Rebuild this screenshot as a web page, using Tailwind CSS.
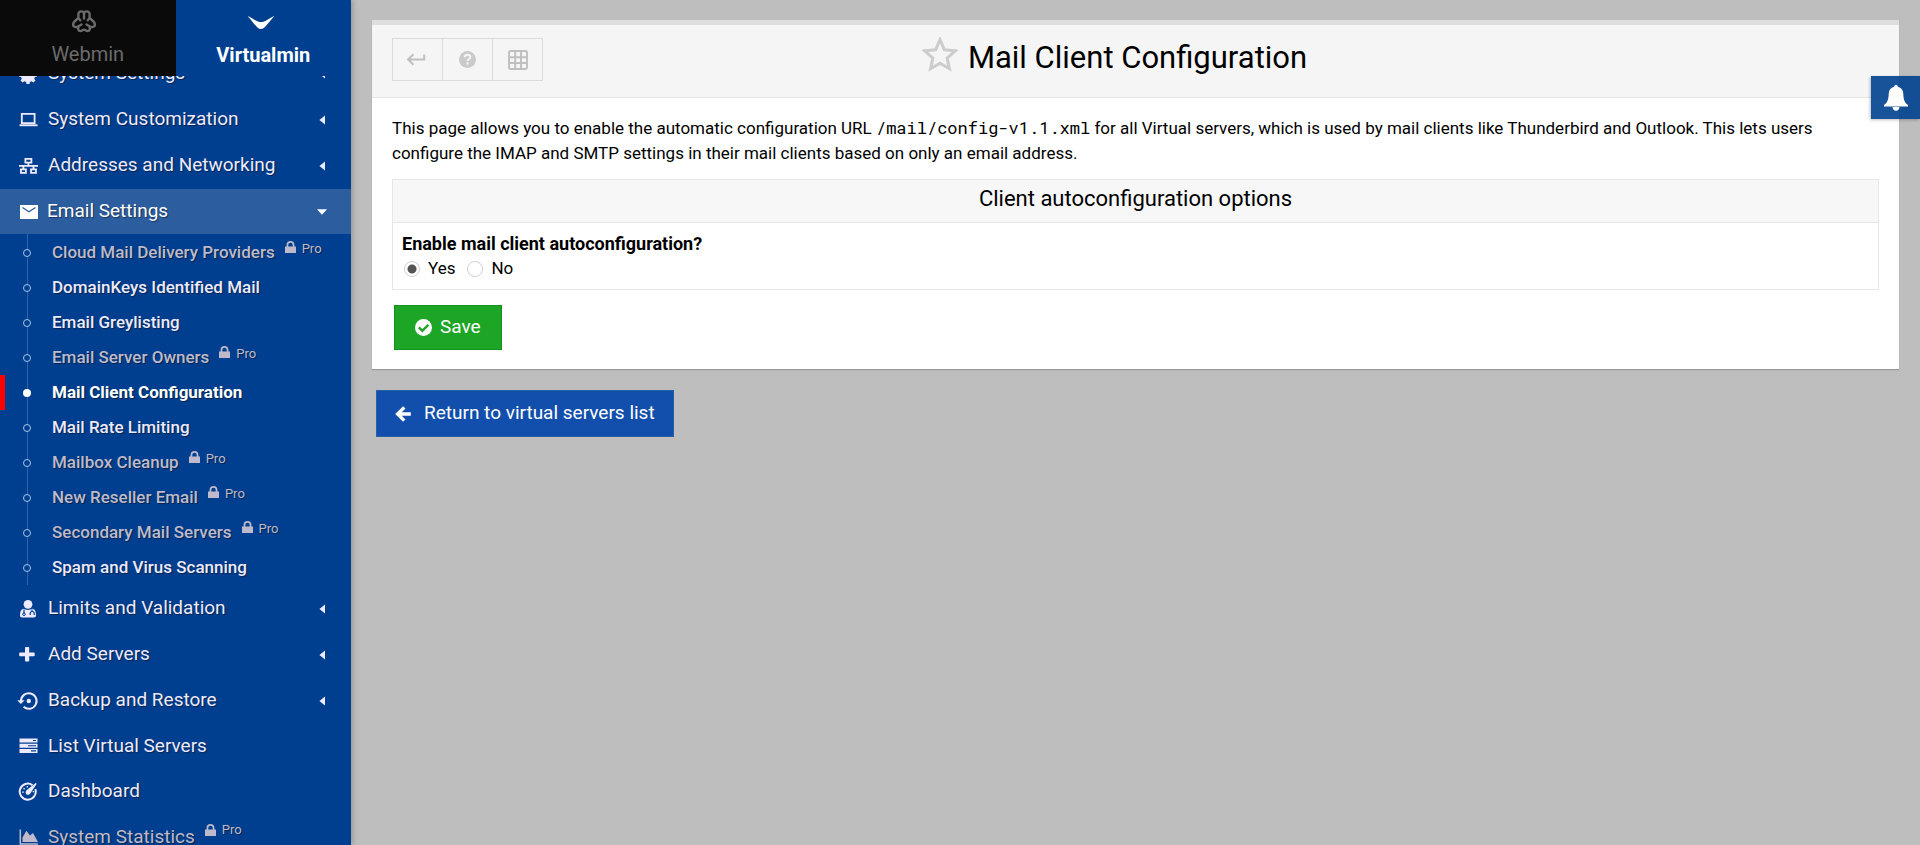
<!DOCTYPE html>
<html lang="en">
<head>
<meta charset="utf-8">
<meta name="viewport" content="width=device-width, initial-scale=1">
<title>Mail Client Configuration</title>
<script src="https://cdn.jsdelivr.net/npm/@tailwindcss/browser@4"></script>
</head>
<body class="flex h-screen overflow-hidden bg-[#bebebe] font-['Roboto',sans-serif] text-[17px] text-black">

<svg class="hidden">
  <symbol id="caret-left" viewBox="0 0 6 10"><path d="M6 0.5v9L0.4 5z" fill="currentColor"/></symbol>
  <symbol id="caret-down" viewBox="0 0 10 6"><path d="M0 0.3h10L5 5.8z" fill="currentColor"/></symbol>
  <symbol id="lock" viewBox="0 0 11 12"><path d="M0 5.4h1.6V3.9a3.9 3.9 0 0 1 7.8 0v1.5H11V12H0zM3.3 5.4h4.4V3.9a2.2 2.2 0 0 0-4.4 0z" fill="currentColor" fill-rule="evenodd"/></symbol>
</svg>

<aside class="relative z-10 flex w-[351px] shrink-0 flex-col overflow-hidden bg-[#003f8f] text-[#eeeaff] shadow-[2px_0_5px_rgba(0,0,0,0.2)]">
  <div class="absolute inset-x-0 top-0 z-10 flex h-[76px]">
    <button class="flex flex-1 flex-col items-center bg-[#0a0a0a] pt-[10px] text-xl text-[#6b6b6b]">
      <svg class="ml-[-7px] h-[23px] w-[24px]" viewBox="0 0 24 23" fill="none" stroke="currentColor" stroke-width="2.4" stroke-linejoin="round" stroke-linecap="round"><path d="M8.200 10.200L6.400 8V4a2.700 2.700 0 0 1 2.900-2.600c1.600 0 2.700 1.100 2.700 2.600 0-1.500 1.100-2.600 2.700-2.600A2.700 2.700 0 0 1 17.600 4v4l-1.800 2.200M12 4v4.500M6.400 8L3 11c-2.300 2-2.300 4.600-.9 5.600 1.300.9 2.900.6 4.400-.3l3-1.800M17.600 8L21 11c2.300 2 2.300 4.600.9 5.600-1.300.9-2.900.6-4.400-.3l-3-1.800M6.500 17c-1 1.700 0 4 1.900 4.100 1.500 0 2.400-1.500 3.600-1.500s2.100 1.500 3.600 1.500c1.900-.1 2.900-2.400 1.900-4.100"/></svg>
      <span class="mt-[6px] leading-[30px]">Webmin</span>
    </button>
    <button class="flex flex-1 flex-col items-center bg-[#003f8f] pt-[15px] text-xl font-bold text-white">
      <svg class="ml-[-5px] h-[14px] w-[28px]" viewBox="0 0 28 14" fill="currentColor"><path d="M.6.9C5.500 2.800 9.500 7 13.900 7S22.500 2.800 27.400.9C23 5.500 20 10.500 16.800 12.900c-1.900 1.300-3.900 1.300-5.800 0C8 10.500 5 5.500.6.9z"/></svg>
      <span class="mt-[11px] leading-[30px]">Virtualmin</span>
    </button>
  </div>

  <nav class="flex flex-col gap-px pt-[51px] text-[19px] [text-shadow:1px_1px_1px_rgba(0,0,0,0.45)]">
    <a href="#" class="flex h-[45px] shrink-0 items-center pl-[18px] pr-[26px]">
      <svg class="mr-2.5 size-5" viewBox="0 0 20 20"><path d="M8.500 2h3l.4 2.200 1.700.7 1.800-1.300 2.100 2.100-1.300 1.800.7 1.700 2.100.4v3l-2.100.4-.7 1.700 1.300 1.800-2.100 2.100-1.800-1.300-1.700.7-.4 2.100h-3l-.4-2.100-1.700-.7-1.800 1.300-2.100-2.100 1.300-1.800-.7-1.700L1 12.600v-3l2.100-.4.7-1.700-1.300-1.800 2.100-2.100 1.800 1.300 1.700-.7z" fill="currentColor"/></svg>
      System Settings
      <svg class="ml-auto h-[10px] w-[6px]"><use href="#caret-left"/></svg>
    </a>
    <a href="#" class="flex h-[45px] shrink-0 items-center pl-[18px] pr-[26px]">
      <svg class="mr-2.5 size-5" viewBox="0 0 20 20"><path d="M3.800 3.800h12.800v9.400H3.800z" fill="none" stroke="currentColor" stroke-width="1.800"/><path d="M1.500 14.300h18v1.900h-18z" fill="currentColor"/></svg>
      System Customization
      <svg class="ml-auto h-[10px] w-[6px]"><use href="#caret-left"/></svg>
    </a>
    <a href="#" class="flex h-[45px] shrink-0 items-center pl-[18px] pr-[26px]">
      <svg class="mr-2.5 size-5" viewBox="0 0 20 20" fill="none" stroke="currentColor" stroke-width="1.800"><path d="M7.400 2.900h6v3.700h-6zM2.900 13.300h5v3.500h-5zM13 13.300h5v3.500h-5z"/><path d="M1 9.900h19M10.400 7v3M5.400 10v3M15.500 10v3"/></svg>
      Addresses and Networking
      <svg class="ml-auto h-[10px] w-[6px]"><use href="#caret-left"/></svg>
    </a>
    <div>
      <a href="#" class="flex h-[45px] items-center bg-[#2c5d9f] pl-[18px] pr-[24px] text-white">
        <svg class="mr-[9px] size-5" viewBox="0 0 20 20"><path d="M2 3h18v14H2z" fill="currentColor"/><path d="M4.500 5.500L11 9.800l6.500-4.300" fill="none" stroke="#2c5d9f" stroke-width="1.300"/></svg>
        Email Settings
        <svg class="ml-auto h-[6px] w-[10px]"><use href="#caret-down"/></svg>
      </a>
      <ul class="relative pt-px text-[17px] font-medium before:absolute before:inset-y-0 before:left-[27px] before:w-px before:bg-[#3065ab]">
        <li><a href="#" class="flex h-[35px] items-center pl-[23px] text-[#bfbacb]"><i class="relative mr-[21px] size-2 rounded-full border border-[#a9c6e6] bg-[#003f8f]"></i>Cloud Mail Delivery Providers<span class="flex items-center gap-1.5 pb-2 pl-2.5 text-[13px] font-normal"><svg class="mb-1 h-[12px] w-[11px]"><use href="#lock"/></svg>Pro</span></a></li>
        <li><a href="#" class="flex h-[35px] items-center pl-[23px]"><i class="relative mr-[21px] size-2 rounded-full border border-[#a9c6e6] bg-[#003f8f]"></i>DomainKeys Identified Mail</a></li>
        <li><a href="#" class="flex h-[35px] items-center pl-[23px]"><i class="relative mr-[21px] size-2 rounded-full border border-[#a9c6e6] bg-[#003f8f]"></i>Email Greylisting</a></li>
        <li><a href="#" class="flex h-[35px] items-center pl-[23px] text-[#bfbacb]"><i class="relative mr-[21px] size-2 rounded-full border border-[#a9c6e6] bg-[#003f8f]"></i>Email Server Owners<span class="flex items-center gap-1.5 pb-2 pl-2.5 text-[13px] font-normal"><svg class="mb-1 h-[12px] w-[11px]"><use href="#lock"/></svg>Pro</span></a></li>
        <li><a href="#" aria-current="page" class="flex h-[35px] items-center border-l-[5px] border-[#ff0000] pl-[18px] font-bold text-white"><i class="relative mr-[21px] size-2 rounded-full bg-white"></i>Mail Client Configuration</a></li>
        <li><a href="#" class="flex h-[35px] items-center pl-[23px]"><i class="relative mr-[21px] size-2 rounded-full border border-[#a9c6e6] bg-[#003f8f]"></i>Mail Rate Limiting</a></li>
        <li><a href="#" class="flex h-[35px] items-center pl-[23px] text-[#bfbacb]"><i class="relative mr-[21px] size-2 rounded-full border border-[#a9c6e6] bg-[#003f8f]"></i>Mailbox Cleanup<span class="flex items-center gap-1.5 pb-2 pl-2.5 text-[13px] font-normal"><svg class="mb-1 h-[12px] w-[11px]"><use href="#lock"/></svg>Pro</span></a></li>
        <li><a href="#" class="flex h-[35px] items-center pl-[23px] text-[#bfbacb]"><i class="relative mr-[21px] size-2 rounded-full border border-[#a9c6e6] bg-[#003f8f]"></i>New Reseller Email<span class="flex items-center gap-1.5 pb-2 pl-2.5 text-[13px] font-normal"><svg class="mb-1 h-[12px] w-[11px]"><use href="#lock"/></svg>Pro</span></a></li>
        <li><a href="#" class="flex h-[35px] items-center pl-[23px] text-[#bfbacb]"><i class="relative mr-[21px] size-2 rounded-full border border-[#a9c6e6] bg-[#003f8f]"></i>Secondary Mail Servers<span class="flex items-center gap-1.5 pb-2 pl-2.5 text-[13px] font-normal"><svg class="mb-1 h-[12px] w-[11px]"><use href="#lock"/></svg>Pro</span></a></li>
        <li><a href="#" class="flex h-[35px] items-center pl-[23px]"><i class="relative mr-[21px] size-2 rounded-full border border-[#a9c6e6] bg-[#003f8f]"></i>Spam and Virus Scanning</a></li>
      </ul>
    </div>
    <a href="#" class="flex h-[45px] shrink-0 items-center pl-[18px] pr-[26px]">
      <svg class="mr-2.5 size-5" viewBox="0 0 20 20"><circle cx="10" cy="5.300" r="4.400" fill="currentColor"/><path d="M2 16.500c0-4 1-6.300 3.500-6.700C8 11.300 12 11.300 14.500 9.800c2.500.4 3.500 2.700 3.500 6.700 0 1.300-.8 2-2 2H4c-1.200 0-2-.7-2-2z" fill="currentColor"/><path d="M6 10.500v4M12.200 16v-1.500a2 2 0 0 1 4 0V16M14 10.500v2" stroke="#003f8f" stroke-width="1.200" fill="none"/><circle cx="6" cy="15.200" r="1.300" fill="none" stroke="#003f8f"/></svg>
      Limits and Validation
      <svg class="ml-auto h-[10px] w-[6px]"><use href="#caret-left"/></svg>
    </a>
    <a href="#" class="flex h-[45px] shrink-0 items-center pl-[18px] pr-[26px]">
      <svg class="mr-2.5 size-5" viewBox="0 0 20 20"><path d="M2 7.500h5V2.800c0-.6.300-.8.800-.8h2.600c.5 0 .8.200.8.800v4.700h4.700c.5 0 .8.300.8.800v2.100c0 .5-.3.800-.8.800h-4.700v4.600c0 .5-.3.800-.8.800H7.800c-.5 0-.8-.3-.8-.8v-4.600H2c-.6 0-.8-.3-.8-.8V8.300c0-.5.200-.8.800-.8z" fill="currentColor"/></svg>
      Add Servers
      <svg class="ml-auto h-[10px] w-[6px]"><use href="#caret-left"/></svg>
    </a>
    <a href="#" class="flex h-[45px] shrink-0 items-center pl-[18px] pr-[26px]">
      <svg class="mr-2.5 size-5 overflow-visible" viewBox="0 0 20 20"><path d="M3 10a7.800 7.800 0 1 1 2.600 5.800" fill="none" stroke="currentColor" stroke-width="2"/><path d="M-.8 9.300h7.400L2.900 13z" fill="currentColor"/><circle cx="10.800" cy="10" r="2.200" fill="currentColor"/></svg>
      Backup and Restore
      <svg class="ml-auto h-[10px] w-[6px]"><use href="#caret-left"/></svg>
    </a>
    <a href="#" class="flex h-11 shrink-0 items-center pl-[18px] pr-[26px]">
      <svg class="mr-2.5 size-5" viewBox="0 0 20 20"><path d="M1.500 2.500h18v4h-18zM1.500 7.700h18v4h-18zM1.500 12.900h18v4h-18z" fill="currentColor"/><path d="M15 4.500h3M10 9.700h8M13 14.900h5" stroke="#003f8f" stroke-width="1.100"/></svg>
      List Virtual Servers
    </a>
    <a href="#" class="flex h-[45px] shrink-0 items-center pl-[18px] pr-[26px]">
      <svg class="mr-2.5 size-5" viewBox="0 0 20 20"><path d="M14.500 3.200A8 8 0 1 0 17.300 7" fill="none" stroke="currentColor" stroke-width="2"/><path d="M18.700 1.700L17.700.9l-8.300 6.500c-1.900 1.400-2.300 3.200-1.300 4.500 1.100 1.400 3.100 1.200 4.400-.7z" fill="currentColor"/><path d="M4.200 10.200h1.600M5.500 6.200l1.200 1M9.300 4v1.500M14.700 9.700h1.400" stroke="currentColor" stroke-width="1.300"/></svg>
      Dashboard
    </a>
    <a href="#" class="flex h-[45px] shrink-0 items-center pl-[18px] pr-[26px] text-[#bfbacb]">
      <svg class="mr-2.5 size-5" viewBox="0 0 20 20"><path d="M2.300 1.500v14.400H21" fill="none" stroke="currentColor" stroke-width="1.500"/><path d="M4.500 14v-4.500L8.400 2.800 12 7.500l3-2.500L20 14z" fill="currentColor"/></svg>
      System Statistics<span class="flex items-center gap-1.5 pb-4 pl-2.5 text-[13px]"><svg class="h-[12px] w-[11px]"><use href="#lock"/></svg>Pro</span>
    </a>
  </nav>
</aside>

<main class="min-w-0 flex-1 px-[21px] pt-5">
  <section class="border-t-[5px] border-[#dedede] bg-white shadow-[0_1px_1px_rgba(0,0,0,0.2)]">
    <header class="grid h-[73px] grid-cols-[1fr_auto_1fr] border-b border-[#e6e6e6] bg-[#f5f5f5] px-5">
      <div class="mt-[13px] flex h-[43px] text-[#bfbfbf]">
        <button aria-label="Go back" class="flex w-[51px] items-center justify-center border border-[#dbdbdb] pr-1"><svg class="h-[13px] w-5" viewBox="0 0 20 13" fill="none" stroke="currentColor" stroke-width="2"><path d="M18.200 1.500v5H2M7.500 1.200L2 6.500l5.500 5.300"/></svg></button>
        <button aria-label="Help" class="flex w-[50px] items-center justify-center border-y border-r border-[#dbdbdb] text-[#cacaca]"><svg class="size-[17px]" viewBox="0 0 17 17"><circle cx="8.500" cy="8.500" r="8.500" fill="currentColor"/><path d="M5.700 6.300c.1-1.700 1.200-2.500 2.800-2.500s2.800.9 2.800 2.300c0 2-2.700 1.900-2.700 3.900M8.600 11.300v2.200" fill="none" stroke="#f5f5f5" stroke-width="2"/></svg></button>
        <button aria-label="Module index" class="flex w-[50px] items-center justify-center border-y border-r border-[#dbdbdb]"><svg class="size-5" viewBox="0 0 20 20" fill="none" stroke="currentColor" stroke-width="1.900"><rect x="1" y="1" width="18" height="18" rx="1.500"/><path d="M1 7.300h18M1 13h18M7.200 1v18M13 1v18"/></svg></button>
      </div>
      <div class="mr-[42px] flex items-start gap-[10px] pt-3">
        <button aria-label="Add to favorites" class="text-[#cccccc]"><svg class="size-9" viewBox="0 0 36 36" fill="none" stroke="currentColor" stroke-width="3"><path d="M18 2.600l4.400 10.200 11 1-8.300 7.300 2.400 10.700-9.500-5.600-9.500 5.600 2.400-10.700-8.300-7.300 11-1z"/></svg></button>
        <h1 class="text-[31px] leading-[42px]">Mail Client Configuration</h1>
      </div>
    </header>
    <div class="px-5 pb-[19px] pt-[17px]">
      <p class="leading-[25px]">This page allows you to enable the automatic configuration URL <code class="font-['Roboto_Mono','Liberation_Mono',monospace]">/mail/config-v1.1.xml</code> for all Virtual servers, which is used by mail clients like Thunderbird and Outlook. This lets users configure the IMAP and SMTP settings in their mail clients based on only an email address.</p>
      <form>
        <table class="mt-[13px] w-full border border-[#e6e6e6]">
          <thead><tr><th class="h-[43px] border-b border-[#e6e6e6] bg-[#f7f7f7] pb-1 text-[22px] leading-[30px] font-normal">Client autoconfiguration options</th></tr></thead>
          <tbody><tr><td class="h-[67px] px-[9px] leading-[25px]">
            <b class="block text-lg leading-[25px] font-bold">Enable mail client autoconfiguration?</b>
            <div class="flex items-center">
              <input type="radio" name="auto" id="yes" checked class="ml-0.5 size-4 appearance-none rounded-full border border-[#d0d0d0] bg-white bg-[radial-gradient(circle,#555_4px,transparent_5px)]"><label for="yes" class="ml-2">Yes</label>
              <input type="radio" name="auto" id="no" class="ml-3 size-4 appearance-none rounded-full border border-[#d0d0d0] bg-white"><label for="no" class="ml-2">No</label>
            </div>
          </td></tr></tbody>
        </table>
        <button type="button" class="ml-0.5 mt-[15px] flex h-[45px] items-center gap-2 border border-[#188e22] bg-[#1da526] px-5 text-[19px] text-white"><svg class="size-[17px]" viewBox="0 0 17 17"><circle cx="8.500" cy="8.500" r="8.500" fill="currentColor"/><path d="M3.800 8.300l3.500 3.500 6-6" fill="none" stroke="#1da526" stroke-width="2.400"/></svg>Save</button>
      </form>
    </div>
  </section>
  <a href="#" class="ml-1 mt-[21px] inline-flex h-[47px] items-center gap-[13px] border border-[#2560a4] bg-[#124fac] px-[18px] text-[19px] text-white"><svg class="h-4 w-4" viewBox="0 0 16 16" fill="none" stroke="currentColor" stroke-width="3.400"><path d="M15.800 8H3M9.300 1.400L2.600 8l6.700 6.600"/></svg>Return to virtual servers list</a>
</main>

<button aria-label="Notifications" class="fixed right-0 top-[76px] z-20 flex h-[43px] w-[49px] items-center justify-center bg-[#00408f]/90 text-white shadow-[-1px_1px_3px_rgba(0,0,0,0.25)]"><svg class="size-[26px]" viewBox="0 0 26 26" fill="currentColor"><path d="M13 0c1.200 0 1.800.7 1.800 1.700 3.600.8 5.400 3.500 5.500 7 .2 5.800 1 8.400 4.700 11.300v1.500H1V20c3.700-2.900 4.500-5.500 4.700-11.300.1-3.500 1.900-6.200 5.500-7C11.200.7 11.800 0 13 0zM9.500 22h7c-.2 2.200-1.500 3.700-3.500 3.700S9.700 24.200 9.500 22z"/></svg></button>
</body>
</html>
